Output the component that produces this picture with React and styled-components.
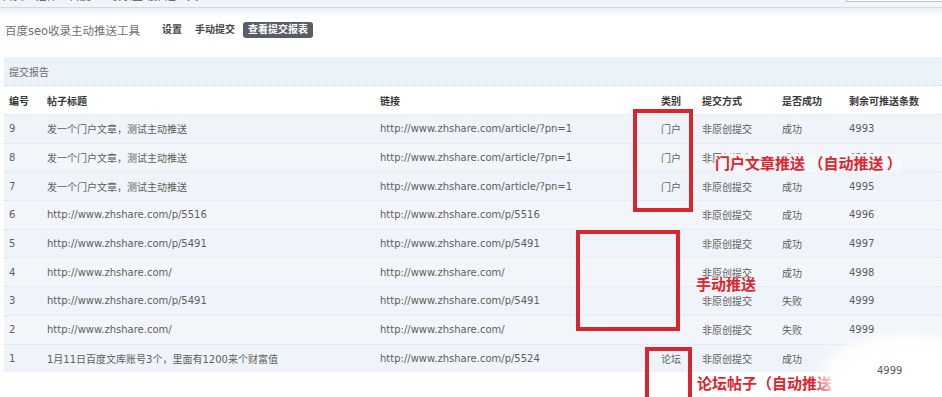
import React from 'react';
import styled, { createGlobalStyle } from 'styled-components';

const GlobalStyle = createGlobalStyle`
    html, body {
        margin: 0;
        background: #ffffff;
    }
    body {
        font-family: "DejaVu Sans", "Noto Sans CJK SC", sans-serif;
        font-size: 10px;
        color: #555;
    }
`;

const Page = styled.div`
    position: relative;
    width: 942px;
    height: 397px;
    overflow: hidden;
`;

const TopStrip = styled.div`
    height: 7px;
    display: flex;
    justify-content: space-between;
    align-items: flex-start;
    background: #f1f4f8;
    border-bottom: 1px solid #d3d9e0;
    overflow: hidden;
`;

const Crumbs = styled.div`
    margin-top: -9px;
    padding-left: 2px;
    font-size: 11px;
    line-height: 12px;
    color: #555;
    white-space: nowrap;
`;

const SearchBox = styled.div`
    width: 95px;
    height: 1px;
    border: 1px solid #b9bec4;
    border-top: none;
    border-right: none;
    background: #fff;
`;

const Glow = styled.div`
    height: 8px;
    background: linear-gradient(#e6eef8, #ffffff);
`;

const TitleBar = styled.div`
    height: 28px;
    display: flex;
    align-items: center;
    padding-left: 5px;
    margin-bottom: 13px;
`;

const Title = styled.h1`
    margin: 0 22px 0 0;
    font-size: 11.5px;
    font-weight: 400;
    color: #707070;
`;

const Nav = styled.nav`
    display: flex;
    align-items: center;
    gap: 13px;
`;

const NavItem = styled.span`
    font-size: 10px;
    font-weight: 700;
    line-height: 16px;
    padding: ${(p) => (p.$active ? '0 5px' : '0')};
    border-radius: 3px;
    margin-left: ${(p) => (p.$active ? '-5px' : '0')};
    color: ${(p) => (p.$active ? '#ffffff' : '#444')};
    background: ${(p) => (p.$active ? '#595e66' : 'transparent')};
`;

const Panel = styled.section`
    margin-left: 4px;
`;

const PanelHead = styled.div`
    height: 28px;
    display: flex;
    align-items: center;
    padding-left: 5px;
    background: #ecf2f9;
    border-bottom: 1px dotted #cfd8e2;
    color: #6c6c6c;
`;

const Row = styled.div`
    display: grid;
    grid-template-columns: 38px 333px 255px 46px 101px 67px 1fr;
    align-items: center;
    height: ${(p) => (p.$head ? '28px' : '28.7px')};
    box-sizing: border-box;
    padding-left: 5px;
    background: ${(p) => (p.$head ? '#ffffff' : p.$odd ? '#f2f6fb' : '#eff4fa')};
    border-top: ${(p) => (p.$head ? 'none' : '1px dotted #dce4ed')};
    font-weight: ${(p) => (p.$head ? 700 : 400)};
    color: ${(p) => (p.$head ? '#3a3a3a' : '#5e5e5e')};
`;

const Cell = styled.div`
    white-space: nowrap;
    overflow: hidden;
    text-align: ${(p) => (p.$right ? 'right' : 'left')};
    padding-left: ${(p) => (p.$pad ? '21px' : '0')};
`;

const Box = styled.div`
    position: absolute;
    border: 4px solid #d6262f;
    box-sizing: border-box;
`;

const Note = styled.div`
    position: absolute;
    font-family: "Noto Sans CJK SC", sans-serif;
    font-size: 15px;
    font-weight: 700;
    line-height: 18px;
    color: #e0242e;
    white-space: pre;
    background: ${(p) => (p.$bg ? 'rgba(244, 248, 252, 0.95)' : 'transparent')};
`;

const Fog = styled.div`
    position: absolute;
    left: 815px;
    top: 332px;
    width: 150px;
    height: 80px;
    background: radial-gradient(ellipse at 60% 55%, #ffffff 40%, rgba(255, 255, 255, 0.85) 58%, rgba(255, 255, 255, 0) 75%);
`;

const FogText = styled.span`
    position: absolute;
    left: 62px;
    top: 33px;
    color: #5a5a5a;
`;

const rows = [
    { id: 9, title: '发一个门户文章，测试主动推送', link: 'http://www.zhshare.com/article/?pn=1', type: '门户', ok: '成功', left: '4993' },
    { id: 8, title: '发一个门户文章，测试主动推送', link: 'http://www.zhshare.com/article/?pn=1', type: '门户', ok: '成功', left: '4994' },
    { id: 7, title: '发一个门户文章，测试主动推送', link: 'http://www.zhshare.com/article/?pn=1', type: '门户', ok: '成功', left: '4995' },
    { id: 6, title: 'http://www.zhshare.com/p/5516', link: 'http://www.zhshare.com/p/5516', type: '', ok: '成功', left: '4996' },
    { id: 5, title: 'http://www.zhshare.com/p/5491', link: 'http://www.zhshare.com/p/5491', type: '', ok: '成功', left: '4997' },
    { id: 4, title: 'http://www.zhshare.com/', link: 'http://www.zhshare.com/', type: '', ok: '成功', left: '4998' },
    { id: 3, title: 'http://www.zhshare.com/p/5491', link: 'http://www.zhshare.com/p/5491', type: '', ok: '失败', left: '4999' },
    { id: 2, title: 'http://www.zhshare.com/', link: 'http://www.zhshare.com/', type: '', ok: '失败', left: '4999' },
    { id: 1, title: '1月11日百度文库账号3个，里面有1200来个财富值', link: 'http://www.zhshare.com/p/5524', type: '论坛', ok: '成功', left: '' },
];

export default function App() {
    return (
        <>
            <GlobalStyle />
            <Page>
                <TopStrip>
                    <Crumbs>首页 › 插件 › 百度seo收录主动推送工具</Crumbs>
                    <SearchBox />
                </TopStrip>
                <Glow />
                <TitleBar>
                    <Title>百度seo收录主动推送工具</Title>
                    <Nav>
                        <NavItem>设置</NavItem>
                        <NavItem>手动提交</NavItem>
                        <NavItem $active>查看提交报表</NavItem>
                    </Nav>
                </TitleBar>
                <Panel>
                    <PanelHead>提交报告</PanelHead>
                    <Row $head>
                        <Cell>编号</Cell>
                        <Cell>帖子标题</Cell>
                        <Cell>链接</Cell>
                        <Cell $right>类别</Cell>
                        <Cell $pad>提交方式</Cell>
                        <Cell>是否成功</Cell>
                        <Cell>剩余可推送条数</Cell>
                    </Row>
                    {rows.map((r, i) => (
                        <Row key={r.id} $odd={i % 2 === 1}>
                            <Cell>{r.id}</Cell>
                            <Cell>{r.title}</Cell>
                            <Cell>{r.link}</Cell>
                            <Cell $right>{r.type}</Cell>
                            <Cell $pad>非原创提交</Cell>
                            <Cell>{r.ok}</Cell>
                            <Cell>{r.left}</Cell>
                        </Row>
                    ))}
                </Panel>

                <Box style={{ left: 633, top: 109, width: 60, height: 103 }} />
                <Box style={{ left: 576, top: 230, width: 104, height: 101 }} />
                <Box style={{ left: 645, top: 347, width: 47, height: 56 }} />
                <Note $bg style={{ left: 715, top: 154 }}>门户文章推送 （自动推送 ）</Note>
                <Note style={{ left: 696, top: 275 }}>手动推送</Note>
                <Note style={{ left: 697, top: 374 }}>论坛帖子（自动推送</Note>
                <Fog>
                    <FogText>4999</FogText>
                </Fog>
            </Page>
        </>
    );
}
